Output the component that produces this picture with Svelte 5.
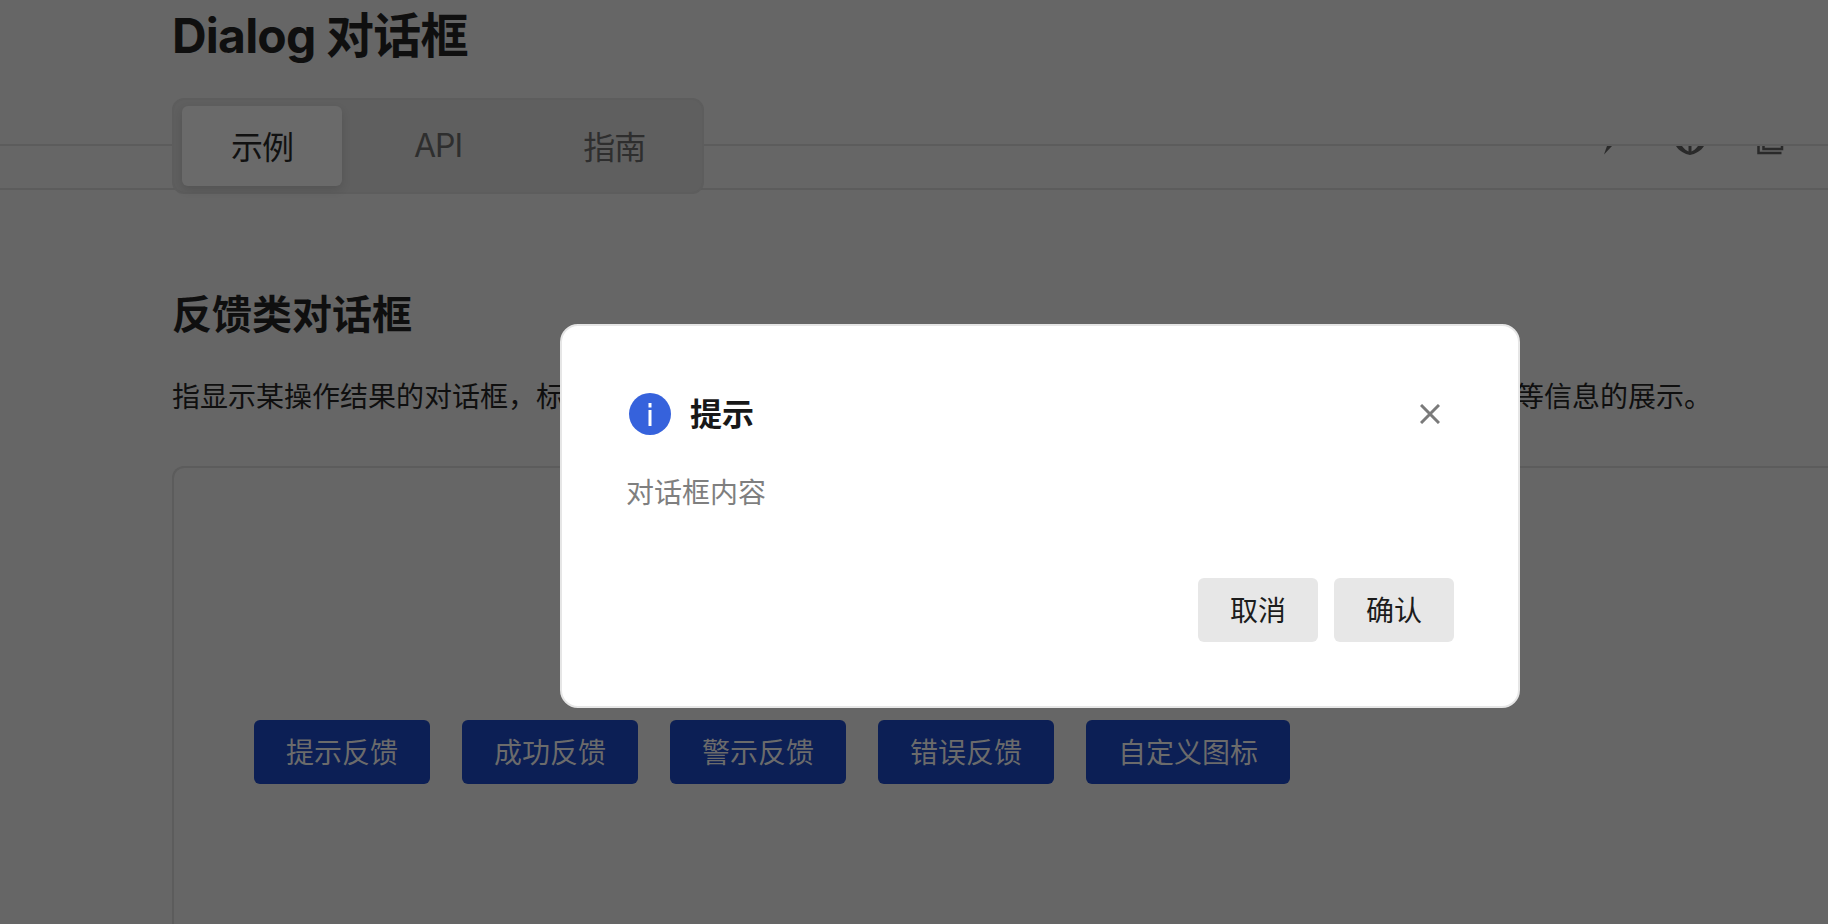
<script>
	const tabs = [
		{ label: '示例', active: true },
		{ label: 'API', active: false },
		{ label: '指南', active: false }
	];
	const demos = ['提示反馈', '成功反馈', '警示反馈', '错误反馈', '自定义图标'];
</script>

<div class="page">
	<header class="head">
		<h1>Dialog 对话框</h1>
		<div class="tabs">
			{#each tabs as tab}
				<button class="tab" class:active={tab.active}>{tab.label}</button>
			{/each}
		</div>
	</header>

	<div class="tabline">
		<div class="tools">
			<svg width="28" height="28" viewBox="0 0 28 28"><path d="M11 19h5l-8 8.500z" fill="currentColor"/></svg>
			<svg width="28" height="28" viewBox="0 0 28 28"><path d="M0 19h6c2 3 5 5 6.500 5.500V19h3v5.500C17 24 20 22 22 19h6c-3 5-9 8-14 9C9 27 3 24 0 19z" fill="currentColor"/></svg>
			<svg width="28" height="28" viewBox="0 0 28 28"><path d="M2.500 19v7h23M7.500 19v3H26v-3" stroke="currentColor" stroke-width="2.500" fill="none"/></svg>
		</div>
	</div>

	<main class="content">
		<h2>反馈类对话框</h2>
		<p>指显示某操作结果的对话框，标题和图标用于强调反馈类型，内容区可用于操作结果的说明、后续操作的建议等信息的展示。</p>
		<section class="demo">
			{#each demos as demo}
				<button class="primary">{demo}</button>
			{/each}
		</section>
	</main>
</div>

<div class="mask">
	<div class="dialog">
		<div class="dialog-head">
			<span class="info">
				<svg width="42" height="42" viewBox="0 0 42 42">
					<circle cx="21" cy="21" r="21" fill="#3662dc"/>
					<rect x="19.500" y="17" width="3" height="16" fill="#fff"/>
					<rect x="19.500" y="10" width="3" height="4.500" fill="#fff"/>
				</svg>
			</span>
			<span class="dialog-title">提示</span>
			<svg class="close" width="20" height="20" viewBox="0 0 20 20">
				<path d="M1 1 19 19M19 1 1 19" stroke="#7a7a7a" stroke-width="3" fill="none"/>
			</svg>
		</div>
		<div class="dialog-body">对话框内容</div>
		<div class="dialog-foot">
			<button class="plain">取消</button>
			<button class="plain">确认</button>
		</div>
	</div>
</div>

<style>
	:global(body) {
		margin: 0;
		background: #666;
		color: #0f0f0f;
		font-family: Inter, 'Noto Sans CJK SC', sans-serif;
		overflow: hidden;
	}

	button {
		font-family: inherit;
		border: none;
		cursor: pointer;
	}

	.page {
		height: 924px;
		overflow: hidden;
	}

	.head {
		height: 144px;
		padding: 0 172px;
		border-bottom: 2px solid #5c5c5c;
		position: relative;
		z-index: 1;
		background: #666;
	}

	h1 {
		margin: 0;
		padding-top: 6px;
		font-size: 48px;
		line-height: 60px;
		font-weight: 700;
		letter-spacing: -0.8px;
		color: #0f0f0f;
	}

	.tabs {
		display: inline-flex;
		gap: 23px;
		margin-top: 32px;
		padding: 6px 8px;
		background: #5f5f5f;
		border: 2px solid #5d5d5d;
		border-radius: 12px;
	}

	.tab {
		height: 80px;
		padding: 0 49px 2px;
		font-size: 32px;
		letter-spacing: -1px;
		background: none;
		color: #2e2e2e;
		border-radius: 6px;
	}

	.tab.active {
		background: #6a6a6a;
		color: #111;
		box-shadow: 0 4px 10px rgba(0, 0, 0, 0.12);
	}

	.tabline {
		display: flow-root;
		height: 42px;
		border-bottom: 2px solid #5c5c5c;
	}

	.tools {
		display: flex;
		justify-content: flex-end;
		gap: 52px;
		padding-right: 44px;
		margin-top: -19px;
		color: #2a2a2a;
	}

	.content {
		padding: 0 0 0 172px;
	}

	h2 {
		margin: 0;
		padding-top: 97px;
		font-size: 40px;
		line-height: 56px;
		font-weight: 700;
		color: #0f0f0f;
	}

	p {
		margin: 32px 0 0;
		font-size: 28px;
		line-height: 44px;
		color: #0f0f0f;
		white-space: nowrap;
	}

	.demo {
		display: flex;
		gap: 32px;
		margin-top: 47px;
		padding: 252px 80px 0;
		height: 600px;
		box-sizing: border-box;
		border: 2px solid #5c5c5c;
		border-right: none;
		border-radius: 12px 0 0 0;
	}

	.primary {
		height: 64px;
		padding: 0 32px 2px;
		font-size: 28px;
		background: #0c1f55;
		color: #6b6b6b;
		border-radius: 6px;
	}

	.mask {
		position: fixed;
		inset: 0;
		z-index: 10;
	}

	.dialog {
		width: 960px;
		box-sizing: border-box;
		margin: 324px 0 0 560px;
		padding: 64px;
		background: #fff;
		border: 2px solid #e6e6e6;
		border-radius: 18px;
	}

	.dialog-head {
		display: flex;
		align-items: center;
		height: 48px;
	}

	.info {
		display: flex;
		align-items: center;
		justify-content: center;
		width: 48px;
		height: 48px;
		margin-right: 16px;
	}

	.dialog-title {
		flex: 1;
		padding-bottom: 5px;
		font-size: 32px;
		font-weight: 700;
		color: #181818;
	}

	.close {
		margin-right: 14px;
	}

	.dialog-body {
		margin-top: 33px;
		font-size: 28px;
		line-height: 44px;
		color: #7f7f7f;
	}

	.dialog-foot {
		display: flex;
		justify-content: flex-end;
		gap: 16px;
		margin-top: 63px;
	}

	.plain {
		width: 120px;
		height: 64px;
		padding: 0 0 2px;
		font-size: 28px;
		background: #e7e7e7;
		color: #1c1c1c;
		border-radius: 6px;
	}
</style>
